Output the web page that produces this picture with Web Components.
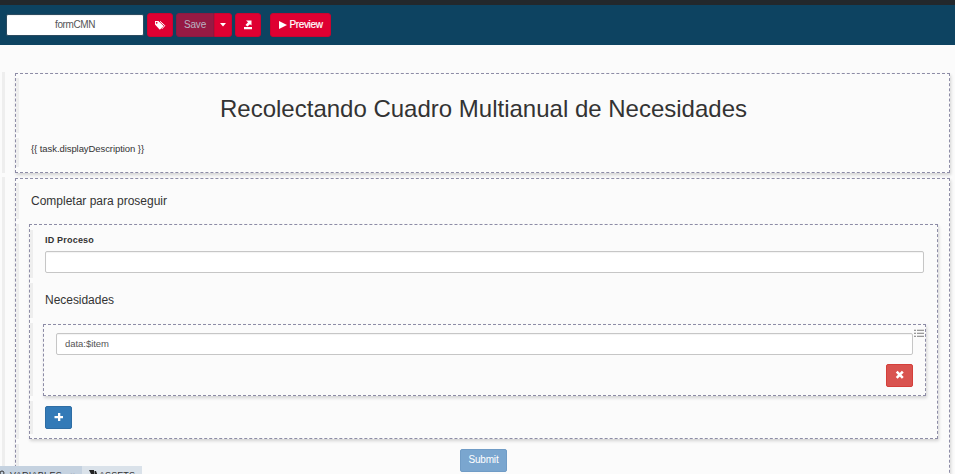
<!DOCTYPE html>
<html lang="es">
<head>
<meta charset="utf-8">
<title>formCMN</title>
<style>
html,body{margin:0;width:955px;height:474px;overflow:hidden;background:#fbfbfb}
body{position:relative;font:10px/14px "Liberation Sans",Arial,sans-serif;color:#333}
</style>
</head>
<body>
<form-editor></form-editor>
<script>
function define(name, html, init) {
  const t = document.createElement('template');
  t.innerHTML = html;
  customElements.define(name, class extends HTMLElement {
    constructor() {
      super();
      this.attachShadow({mode: 'open'}).append(t.content.cloneNode(true));
    }
    connectedCallback() { if (init) init(this); }
  });
}

/* Single line label whose tracking adapts to the width given in "w". */
define('fit-text', `<style>:host{display:inline-block;white-space:nowrap;flex:none}span{display:inline-block}</style><span><slot></slot></span>`, el => {
  const s = el.shadowRoot.querySelector('span');
  const w = parseFloat(el.getAttribute('w'));
  s.style.letterSpacing = '0px';
  const n = el.textContent.length;
  s.style.letterSpacing = ((w - s.getBoundingClientRect().width) / n) + 'px';
});

const icons = {
  tags: '<svg width="12" height="10" viewBox="0 0 12 10"><path fill="#fff" fill-rule="evenodd" d="M1 1h3.4L9.2 5.4a.7.7 0 0 1 0 1L6.3 9.200a.7.700 0 0 1-1 0L1 4.600zM2.700 2a.8.8 0 1 0 .01 0z"/><path d="M6 1.300l4.800 4.300L8 8.800" fill="none" stroke="#fff" stroke-width="1"/></svg>',
  caret: '<svg width="6" height="4" viewBox="0 0 6 4"><path fill="#fff" d="M0 0h6L3 3.500z"/></svg>',
  share: '<svg width="10" height="10" viewBox="0 0 10 10"><path fill="#fff" d="M3 .5h5.500v5L7 4.300 4.500 6.500 2.500 5l2.500-2.700zM1 7h8v2.300H1z"/></svg>',
  play: '<svg width="8" height="8" viewBox="0 0 8 8"><path fill="#fff" d="M0 0l8 4-8 4z"/></svg>',
  plus: '<svg width="10" height="10" viewBox="0 0 10 10"><path fill="#fff" d="M4 1h2.300v3H9v2.200H6.300V9H4V6.200H.5V4H4z"/></svg>',
  cross: '<svg width="10" height="10" viewBox="0 0 10 10"><path stroke="#fff" stroke-width="2.600" d="M1.700 1.700l6.100 6.100M7.800 1.700L1.700 7.800"/></svg>',
  list: '<svg width="10" height="9" viewBox="0 0 10 9"><path stroke="#999" d="M0 1.500h2M0 4.500h2M0 7.500h2M3 1.500h7M3 4.500h7M3 7.500h7"/><path stroke="#ddd" d="M0 .5h2M0 3.500h2M0 6.500h2M3 .5h7M3 3.500h7M3 6.500h7"/></svg>',
  lens: '<svg width="6" height="8" viewBox="0 0 6 8"><circle cx="2" cy="3" r="2" fill="none" stroke="#333"/><path d="M3 4l2 3" stroke="#333"/></svg>',
  tag: '<svg width="9" height="9" viewBox="0 0 9 9"><path fill="#222" d="M0 0h5v4H2zM5.500 1H7l1.500 4L7 9H4V4.500h1.500z"/></svg>'
};
define('ui-icon', `<style>:host{display:inline-flex;flex:none}svg{display:block}</style><span></span>`, el => {
  el.shadowRoot.querySelector('span').innerHTML = icons[el.getAttribute('name')];
});

define('ui-button', `<style>
:host{display:flex;align-items:center;justify-content:center;box-sizing:border-box;width:var(--w);height:23px;
 flex:none;color:#fff;background:var(--bg,#df0032);border:1px solid var(--bd,#c9042f);border-radius:var(--r,3px);gap:3px;padding-bottom:1px}
</style><slot></slot>`);

define('text-box', `<style>
:host{display:flex;align-items:center;box-sizing:border-box;height:22px;background:#fff;border:1px solid #c6c6c6;border-radius:2px;padding:0 8px;color:#555;box-shadow:inset 0 1px 1px rgba(0,0,0,.05)}
</style><slot></slot>`);

/* Row with the grey grip rail on its left side. */
define('form-row', `<style>
:host{display:block;box-sizing:border-box;height:var(--h);border-left:3px solid #eee;flex:none}
</style><slot></slot>`);

/* Dashed drop zone that stacks its rows. */
define('drop-zone', `<style>
:host{display:flex;flex-direction:column;gap:5px;box-sizing:border-box;width:var(--w);height:var(--h);
 border:1px dashed #8d8ca6;box-shadow:1px 2px 3px rgba(0,0,0,.16);background:#fbfbfb}
</style><slot></slot>`);

define('tool-bar', `<style>
:host{display:flex;box-sizing:border-box;height:45px;border-top:5px solid #23282c;background:#0d4361;padding:8px 0 0 6px}
text-box{width:138px;margin:1px 3px 0 0;justify-content:center;border-color:#2b4b60}
ui-button{height:24px}
.group{display:flex;margin:0 3px}
</style>
<text-box><fit-text w="40">formCMN</fit-text></text-box>
<ui-button style="--w:26px"><ui-icon name="tags"></ui-icon></ui-button>
<div class="group">
<ui-button style="--w:38px;--bg:#961a44;--bd:#8b1a41;--r:3px 0 0 3px;color:#b9b3c2"><fit-text w="22">Save</fit-text></ui-button>
<ui-button style="--w:18px;--r:0 3px 3px 0"><ui-icon name="caret"></ui-icon></ui-button>
</div>
<ui-button style="--w:26px"><ui-icon name="share"></ui-icon></ui-button>
<ui-button style="--w:61px;margin-left:9px;-webkit-text-stroke:.2px #fff"><ui-icon name="play"></ui-icon><fit-text w="33">Preview</fit-text></ui-button>`);

define('dock-tabs', `<style>
:host{position:absolute;left:0;bottom:0;display:flex;height:8px;width:142px;overflow:hidden;font:9px/10px "Liberation Sans",Arial,sans-serif}
div{display:flex;box-sizing:border-box;height:20px;padding-top:4px;background:#dae2ea}
.on{width:82px;background:#c5d2e0;gap:4px}
.off{width:60px;padding-left:7px;gap:1px}
</style>
<div class="on"><ui-icon name="lens"></ui-icon><fit-text w="52">VARIABLES</fit-text><fit-text w="6" style="color:#aab5c2;margin-left:4px">×</fit-text></div>
<div class="off"><ui-icon name="tag"></ui-icon><fit-text w="36">ASSETS</fit-text></div>`);

define('form-editor', `<style>
:host{display:block;position:relative;height:474px;overflow:hidden}
main{display:flex;flex-direction:column;gap:4px;padding:27px 0 0 2px}
.outer{padding:1px 0 0 10px}
h1{margin:0;padding:17px 0 0;font:24px/28px "Liberation Sans",Arial,sans-serif;text-align:center;width:929px}
.desc{padding:4px 0 0 12px;font-size:9.500px}
h2{margin:0;font:12px/16px "Liberation Sans",Arial,sans-serif}
.label{display:block;font-weight:700;font-size:9px;line-height:12px}
.item{display:flex;padding:8px 1px 0 12px;box-sizing:border-box;height:30px}
.item text-box{width:857px}
ui-icon[name=list]{margin:-4px 0 0 1px;align-self:flex-start}
.remove{display:flex;padding:0 0 0 842px}
</style>
<tool-bar></tool-bar>
<main>
<form-row class="outer" style="--h:101px">
 <drop-zone style="--w:935px;--h:100px;padding-top:4px">
  <form-row style="--h:55px"><h1><fit-text w="527">Recolectando Cuadro Multianual de Necesidades</fit-text></h1></form-row>
  <form-row class="desc" style="--h:29px"><fit-text w="113">{{ task.displayDescription }}</fit-text></form-row>
 </drop-zone>
</form-row>
<form-row class="outer" style="--h:320px">
 <drop-zone style="--w:935px;--h:330px;padding-top:4px">
  <form-row style="--h:36px;padding:10px 0 0 12px"><h2><fit-text w="136">Completar para proseguir</fit-text></h2></form-row>
  <form-row style="--h:215px;padding-left:10px">
   <drop-zone style="--w:909px;--h:215px;padding-top:5px">
    <form-row style="--h:48px;padding:4px 0 0 12px"><fit-text class="label" w="49">ID Proceso</fit-text><text-box style="width:879px;margin-top:5px"></text-box></form-row>
    <form-row style="--h:35px;padding:9px 0 0 12px"><h2><fit-text w="69">Necesidades</fit-text></h2></form-row>
    <form-row style="--h:73px;padding:1px 0 0 10px">
     <drop-zone style="--w:883px;--h:72px;gap:9px">
      <div class="item"><text-box><fit-text w="44" style="font-size:9.500px">data:$item</fit-text></text-box><ui-icon name="list"></ui-icon></div>
      <div class="remove"><ui-button style="--w:27px;--bg:#d9534f;--bd:#d43f3a;--r:2px"><ui-icon name="cross"></ui-icon></ui-button></div>
     </drop-zone>
    </form-row>
    <form-row style="--h:33px;padding:5px 0 0 12px"><ui-button style="--w:27px;--bg:#337ab7;--bd:#2e6da4;--r:2px"><ui-icon name="plus"></ui-icon></ui-button></form-row>
   </drop-zone>
  </form-row>
  <form-row style="--h:60px;padding:5px 0 0 441px"><ui-button style="--w:47px;--bg:#7aa6cf;--bd:#709cc6;--r:2px"><fit-text w="30">Submit</fit-text></ui-button></form-row>
 </drop-zone>
</form-row>
</main>
<dock-tabs></dock-tabs>`);
</script>
</body>
</html>
